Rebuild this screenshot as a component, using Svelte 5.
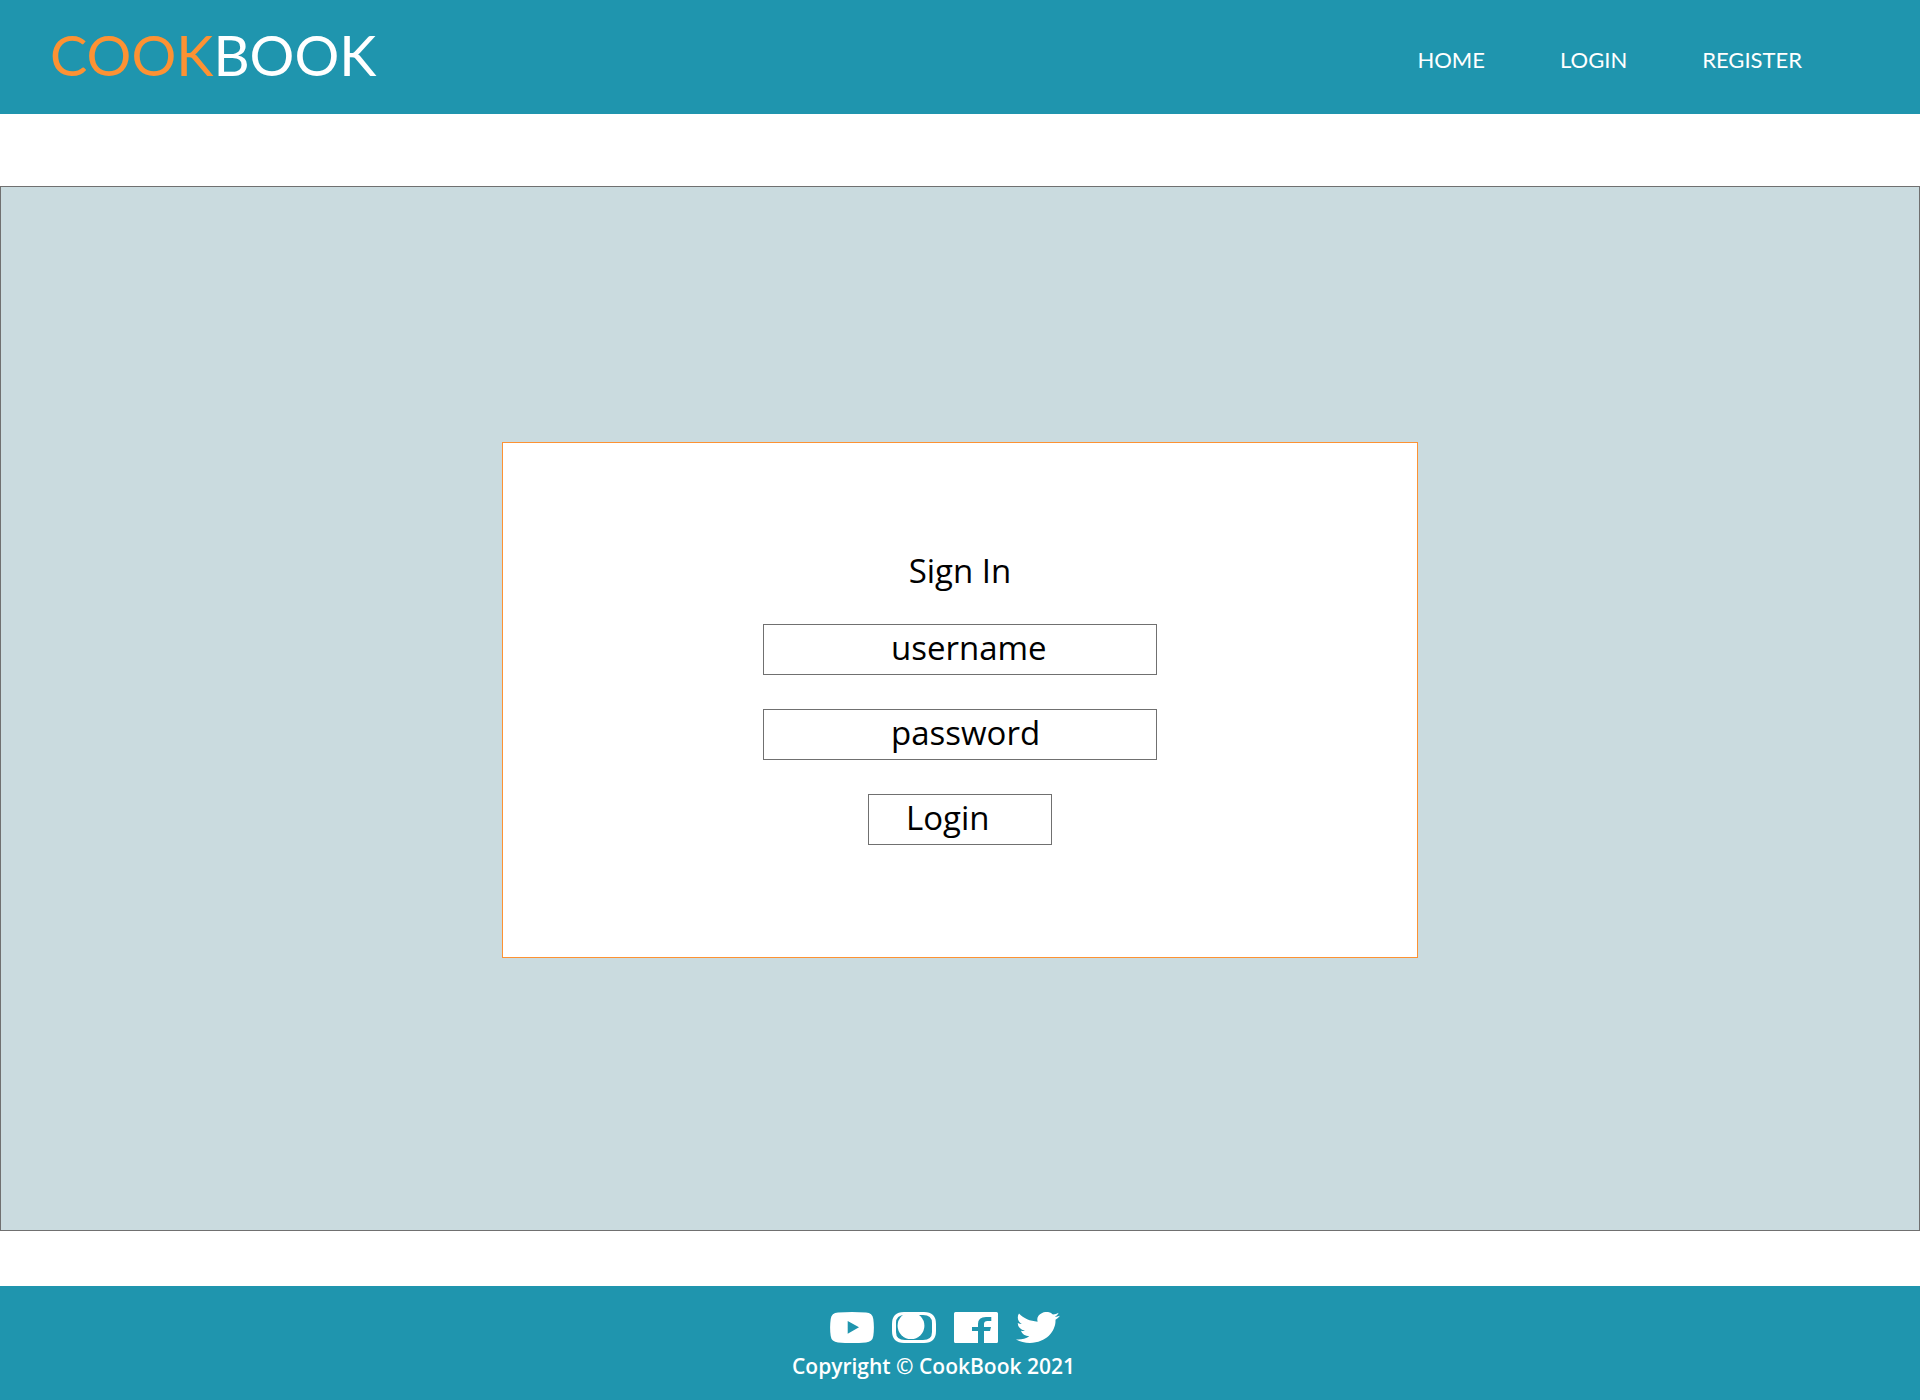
<script>
  let username = $state('');
  let password = $state('');
  const links = ['HOME', 'LOGIN', 'REGISTER'];
</script>

<div class="page">
  <header>
    <a class="logo" href="#home"><span class="cook">COOK</span>BOOK</a>
    <nav>
      {#each links as link}
        <a href={'#' + link.toLowerCase()}>{link}</a>
      {/each}
    </nav>
  </header>

  <main>
    <form onsubmit={(e) => e.preventDefault()}>
      <h1>Sign In</h1>
      <input type="text" placeholder="username" aria-label="username" bind:value={username} />
      <input type="password" placeholder="password" aria-label="password" bind:value={password} />
      <button type="submit">Login</button>
    </form>
  </main>

  <footer>
    <div class="social">
      <a href="#youtube" aria-label="YouTube">
        <svg viewBox="0 0 44 31">
          <path fill-rule="evenodd" d="M8 .6Q22-.4 36 .6Q42.500 1 43.300 7Q44.500 15.500 43.300 24Q42.500 30 36 30.400Q22 31.400 8 30.400Q1.500 30 .7 24Q-.5 15.500 .7 7Q1.500 1 8 .6ZM17.700 8.900V21.700L29 15.300Z" />
        </svg>
      </a>
      <a href="#instagram" aria-label="Instagram">
        <svg viewBox="0 0 44 31">
          <path fill-rule="evenodd" d="M12 0H32Q44 0 44 12V19Q44 31 32 31H12Q0 31 0 19V12Q0 0 12 0ZM13 3Q4 3 4 11V20Q4 28 13 28H31Q40 28 40 20V11Q40 3 31 3Z" />
          <circle cx="19" cy="13.700" r="13.400" />
        </svg>
      </a>
      <a href="#facebook" aria-label="Facebook">
        <svg viewBox="0 0 44 31">
          <path fill-rule="evenodd" d="M1.500 0H42.500Q44 0 44 1.500V29.500Q44 31 42.500 31H30V19H36L37 15H30V12Q30 9 33.500 9H37.300V5H32Q24 5 24 12V15H18V19H24V31H1.500Q0 31 0 29.500V1.500Q0 0 1.500 0Z" />
        </svg>
      </a>
      <a href="#twitter" aria-label="Twitter">
        <svg viewBox="0 2.200 24 19.600" preserveAspectRatio="none">
          <path d="M23.953 4.570a10 10 0 01-2.825.775 4.958 4.958 0 002.163-2.723c-.951.555-2.005.959-3.127 1.184a4.920 4.920 0 00-8.384 4.482C7.690 8.095 4.067 6.130 1.640 3.162a4.822 4.822 0 00-.666 2.475c0 1.710.870 3.213 2.188 4.096a4.904 4.904 0 01-2.228-.616v.060a4.923 4.923 0 003.946 4.827 4.996 4.996 0 01-2.212.085 4.936 4.936 0 004.604 3.417 9.867 9.867 0 01-6.102 2.105c-.390 0-.779-.023-1.170-.067a13.995 13.995 0 007.557 2.209c9.053 0 13.998-7.496 13.998-13.985 0-.210 0-.420-.015-.630A9.935 9.935 0 0024 4.590z" />
        </svg>
      </a>
    </div>
    <p>Copyright © CookBook 2021</p>
  </footer>
</div>

<style>
  :global(body) {
    margin: 0;
    background: #fff;
  }
  .page {
    min-height: 100vh;
    display: flex;
    flex-direction: column;
    font-family: Lato, 'Open Sans', sans-serif;
  }
  a {
    color: inherit;
    text-decoration: none;
  }
  header {
    box-sizing: border-box;
    height: 114px;
    padding: 0 118px 0 50px;
    display: flex;
    align-items: center;
    justify-content: space-between;
    background: #1f95ae;
    color: #fff;
  }
  .logo {
    font-size: 56px;
    line-height: 110px;
    padding-bottom: 4px;
  }
  .cook {
    color: #fd9233;
  }
  nav {
    display: flex;
    gap: 75px;
    padding-top: 6px;
    font-size: 22px;
    line-height: 28px;
  }
  main {
    box-sizing: border-box;
    flex: 1;
    margin: 72px 0 55px;
    padding: 255px 24px;
    display: flex;
    flex-direction: column;
    align-items: center;
    border: 1px solid #707070;
    background: #cadbdf;
  }
  form {
    box-sizing: border-box;
    width: 100%;
    max-width: 916px;
    padding: 109px 24px 112px;
    display: flex;
    flex-direction: column;
    align-items: center;
    gap: 34px;
    border: 1px solid #fd9233;
    background: #fff;
    font-family: 'Open Sans', Lato, sans-serif;
  }
  h1 {
    margin: 0;
    font-size: 33px;
    font-weight: 400;
    line-height: 38px;
  }
  input,
  button {
    box-sizing: border-box;
    height: 51px;
    border: 1px solid #707070;
    border-radius: 0;
    background: #fff;
    color: #000;
    font-family: inherit;
    font-size: 33px;
    line-height: 44px;
    text-align: left;
  }
  input {
    width: 100%;
    max-width: 394px;
    padding: 0 0 4px 127px;
  }
  input::placeholder {
    color: #000;
    opacity: 1;
  }
  button {
    width: 184px;
    padding: 0 0 4px 37px;
  }
  footer {
    box-sizing: border-box;
    min-height: 114px;
    padding-top: 26px;
    display: flex;
    flex-direction: column;
    align-items: center;
    gap: 9px;
    background: #1f95ae;
    color: #fff;
  }
  .social {
    display: flex;
    gap: 18px;
    padding-right: 30px;
  }
  .social svg {
    display: block;
    width: 44px;
    height: 31px;
    fill: #fff;
  }
  footer p {
    margin: 0;
    padding-right: 53px;
    font-family: 'Open Sans', Lato, sans-serif;
    font-size: 21px;
    font-weight: 600;
    line-height: 28px;
  }
</style>
